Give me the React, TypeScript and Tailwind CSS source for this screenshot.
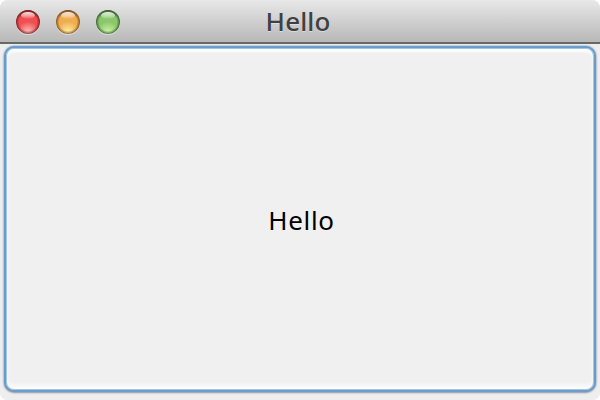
type LightProps = { base: string; edge: string; glow: string; id: string };

function Light({ base, edge, glow, id }: LightProps) {
  return (
    <svg viewBox="0 0 26 26" className="h-[26px] w-[26px]">
      <defs>
        <radialGradient id={`${id}-body`} cx="0.5" cy="0.95" r="0.95">
          <stop offset="0" stopColor={glow} />
          <stop offset="0.5" stopColor={base} />
          <stop offset="0.78" stopColor={base} />
          <stop offset="1" stopColor={edge} />
        </radialGradient>
        <linearGradient id={`${id}-rim`} x1="0" y1="0" x2="0" y2="1">
          <stop offset="0" stopColor={edge} stopOpacity="1" />
          <stop offset="1" stopColor={edge} stopOpacity="0.7" />
        </linearGradient>
        <linearGradient id={`${id}-shine`} x1="0" y1="0" x2="0" y2="1">
          <stop offset="0" stopColor="#fff" stopOpacity="0.9" />
          <stop offset="1" stopColor="#fff" stopOpacity="0.1" />
        </linearGradient>
      </defs>
      <circle cx="13" cy="14.2" r="12" fill="#fff" opacity="0.4" />
      <circle cx="13" cy="13" r="11.7" fill={`url(#${id}-body)`} />
      <circle cx="13" cy="13" r="10.4" fill="none" stroke={edge} strokeOpacity="0.35" strokeWidth="1.8" />
      <circle cx="13" cy="13" r="11.4" fill="none" stroke={`url(#${id}-rim)`} strokeWidth="1.2" />
      <ellipse cx="13" cy="6.3" rx="6.8" ry="3.3" fill={`url(#${id}-shine)`} />
    </svg>
  );
}

export default function App() {
  return (
    <div className="h-[400px] w-[600px] overflow-hidden bg-white">
      <div className="flex h-full flex-col overflow-hidden rounded-t-[8px] rounded-b-[7px] bg-[#eeeeee]">
        <header className="grid h-[44px] shrink-0 grid-cols-[1fr_auto_1fr] items-center border-b-2 border-[#686868] bg-linear-to-b from-[#e8e8e8] to-[#b8b8b8] pb-px">
          <div className="flex gap-[14px] pl-[15px] pt-[2px]">
            <Light id="close" base="#f04e50" edge="#7e2226" glow="#ffc5c0" />
            <Light id="minimize" base="#efad50" edge="#855322" glow="#fff3a6" />
            <Light id="zoom" base="#8bc66b" edge="#3d6432" glow="#d0f5a8" />
          </div>
          <h1 className="mr-[4px] font-['Noto_Sans',sans-serif] text-[26px] leading-[36px] font-medium tracking-[0.1px] text-[#404040] [text-shadow:0_1px_0_rgba(255,255,255,0.4)]">Hello</h1>
        </header>
        <main className="flex min-h-0 flex-1 px-[4px] pt-[2px] pb-[8px]">
          <button className="flex flex-1 items-center justify-center rounded-[10px] border-2 border-[#6c9ccb] bg-[#f0f0f0] pt-px pl-[3px] font-['Noto_Sans',sans-serif] text-[26px] leading-[36px] tracking-[0.7px] text-black shadow-[inset_0_0_0_1px_#a3c5e4,inset_0_4px_3px_#fff,inset_0_-4px_4px_#fff,0_0_2px_rgba(80,130,180,0.8),0_1px_2px_rgba(0,0,0,0.3)]">
            Hello
          </button>
        </main>
      </div>
    </div>
  );
}
